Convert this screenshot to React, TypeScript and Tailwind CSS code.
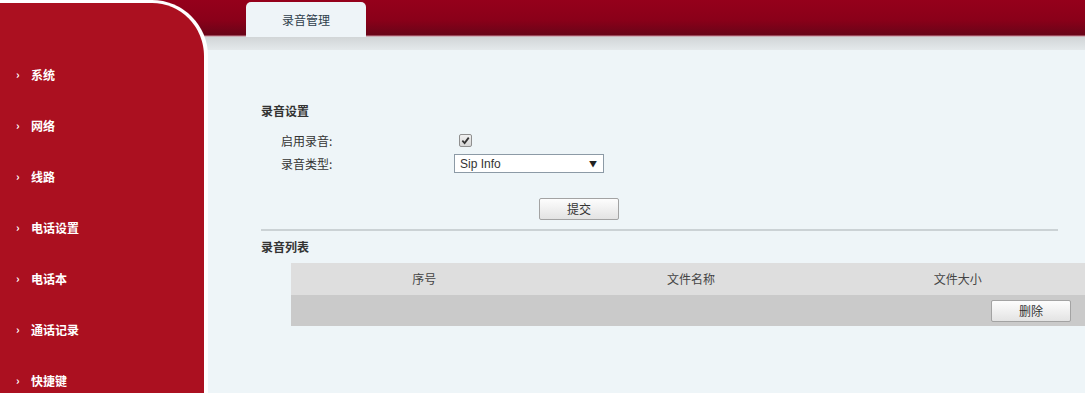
const menu = ["系统", "网络", "线路", "电话设置", "电话本", "通话记录", "快捷键"];

function Sidebar() {
  return (
    <aside className="w-[208px] h-[393px] shrink-0 bg-[#ab1020] border-t-[3px] border-r-[4px] border-white rounded-tr-[56px] pt-[46px]">
      {menu.map((item) => (
        <div key={item} className="h-[51px] flex items-center pl-[16px] text-white font-bold text-[12px]">
          <span className="w-[15px] text-[11px] leading-none">›</span>
          <span>{item}</span>
        </div>
      ))}
    </aside>
  );
}

function Button({ label }: { label: string }) {
  return (
    <button className="w-[80px] h-[22px] border border-[#a3a3a3] rounded-[2px] bg-[linear-gradient(to_bottom,#fdfdfd,#e3e3e3)] text-[12px] text-[#333] leading-none">
      {label}
    </button>
  );
}

function Checkbox() {
  return (
    <span className="w-[13px] h-[13px] border border-[#8f8f8f] rounded-[2px] bg-[linear-gradient(to_bottom,#f0f0f0,#d6d6d6)] flex items-center justify-center">
      <svg width="9" height="9" viewBox="0 0 10 10">
        <path d="M1.5 5.2 L4 7.8 L8.6 1.8" fill="none" stroke="#333" strokeWidth="2" />
      </svg>
    </span>
  );
}

export default function App() {
  return (
    <div
      className="w-[1085px] h-[393px] overflow-hidden flex bg-[linear-gradient(to_bottom,#95001b_0px,#8a0019_20px,#690418_35px,#c98896_36px,#d1d5d7_37px,#e4e9eb_50px,#eef5f8_50px)] text-[#333]"
      style={{ fontFamily: '"Noto Sans CJK SC", "Liberation Sans", sans-serif' }}
    >
      <Sidebar />

      <main className="flex-1 min-w-0">
        {/* Tab bar */}
        <div className="h-[50px] pl-[38px] pt-[2px]">
          <div className="w-[120px] h-[35px] rounded-t-[5px] bg-[#eef4f8] flex items-center justify-center text-[12px] text-[#2f3e4c]">
            录音管理
          </div>
        </div>

        <section className="pl-[53px] pr-[27px]">
          {/* Recording settings */}
          <h2 className="mt-[53px] h-[16px] leading-[16px] text-[12px] font-bold">录音设置</h2>

          <div className="mt-[10px] h-[23px] flex items-center text-[12px]">
            <span className="w-[193px] pl-[20px]">启用录音:</span>
            <span className="ml-[5px]">
              <Checkbox />
            </span>
          </div>
          <div className="h-[23px] flex items-center text-[12px]">
            <span className="w-[193px] pl-[20px]">录音类型:</span>
            <div className="w-[150px] h-[19px] border border-[#8c9aa6] bg-white flex items-center justify-between pl-[5px] pr-[6px]">
              <span className="text-[12px]" style={{ fontFamily: '"Liberation Sans", sans-serif' }}>
                Sip Info
              </span>
              <span className="text-[8px] leading-none text-[#222]">▼</span>
            </div>
          </div>

          <div className="mt-[20px] ml-[278px]">
            <Button label="提交" />
          </div>

          <div className="mt-[9px] h-[2px] bg-[#cbd2d5]" />

          {/* Recording list */}
          <h2 className="mt-[8px] h-[16px] leading-[16px] text-[12px] font-bold">录音列表</h2>

          <div className="mt-[8px] ml-[30px] w-[800px] text-[12px]">
            <div className="h-[32px] grid grid-cols-3 items-center text-center bg-[#dedede] text-[#444]">
              <span>序号</span>
              <span>文件名称</span>
              <span>文件大小</span>
            </div>
            <div className="h-[31px] bg-[#cacaca] flex items-center justify-end pr-[20px]">
              <Button label="删除" />
            </div>
          </div>
        </section>
      </main>
    </div>
  );
}
